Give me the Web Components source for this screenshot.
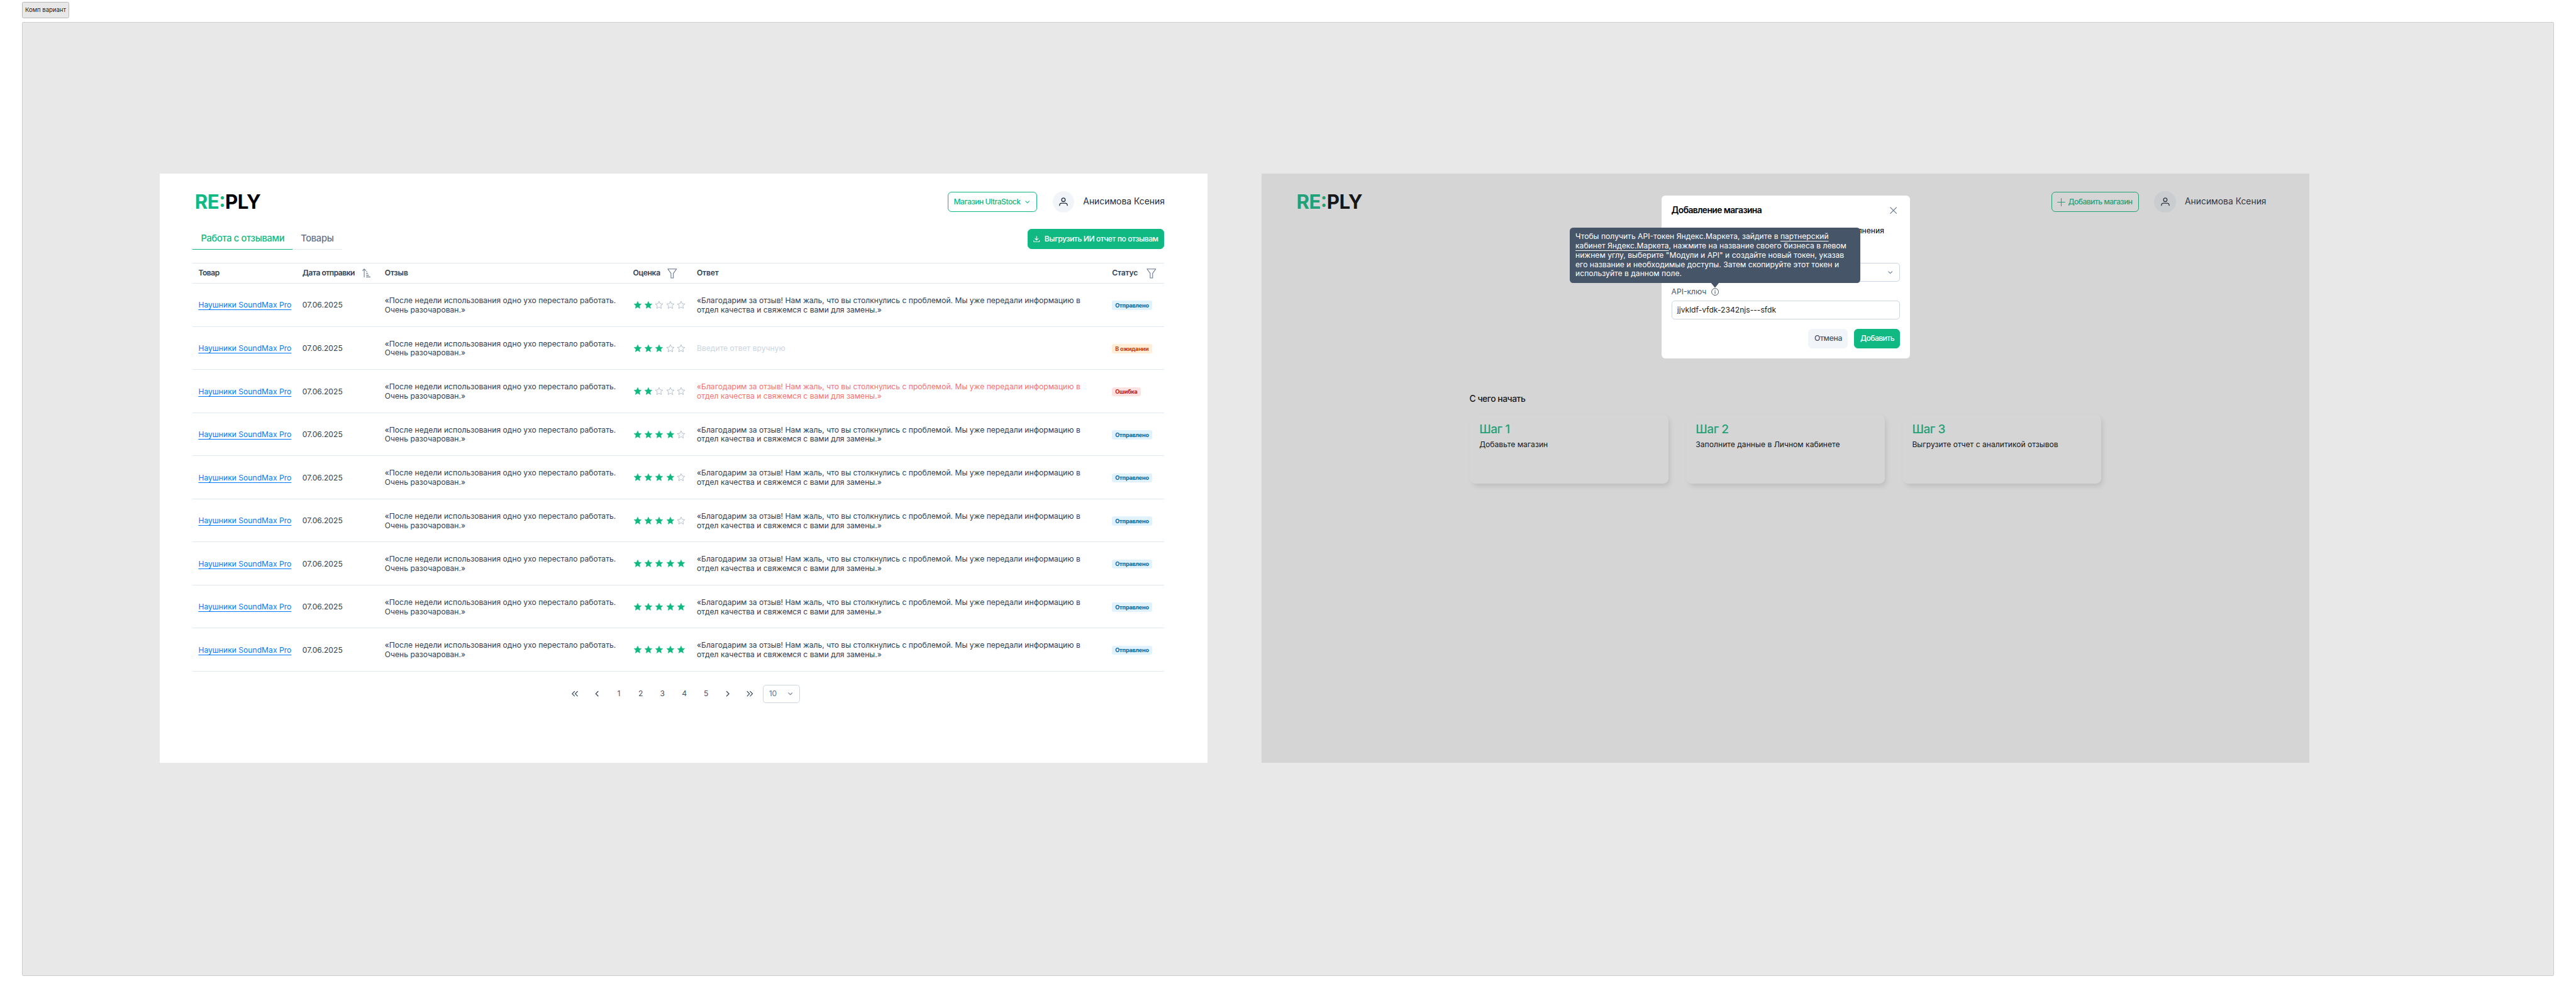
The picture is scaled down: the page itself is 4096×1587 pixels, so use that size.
<!DOCTYPE html>
<html lang="ru">
<head>
<meta charset="utf-8">
<title>RE:PLY</title>
<style>
  html, body { margin: 0; background: #fff; }
  body { font-family: Inter, "Liberation Sans", sans-serif; color: #334155; }
</style>
</head>
<body>
<design-board label="Комп вариант">
  <reviews-screen></reviews-screen>
  <start-screen></start-screen>
</design-board>
<script>
// Sizes are written in design pixels; K turns them into screen pixels.
const K = .8676;
const base = `<style>*{box-sizing:border-box} svg{display:block;flex:none}</style>`;
const scale = text => text.replace(/(-?\d*\.?\d+)px/g, (_, n) => +(n * K).toFixed(4) + 'px');
function define(name, render) {
  customElements.define(name, class extends HTMLElement {
    connectedCallback() {
      if (this.shadowRoot) return;
      this.attachShadow({ mode: 'open' }).innerHTML = scale(base + render(this));
    }
  });
}

const icons = {
  down: [8.4, 5.6, '<path d="M.9 1l3.300 3.300L7.500 1" fill="none" stroke="currentColor" stroke-width="1.2" stroke-linecap="round" stroke-linejoin="round"/>'],
  plus: [15, 15, '<path d="M7.5 .7v13.6M.7 7.5h13.6" fill="none" stroke="currentColor" stroke-width="1.2" stroke-linecap="round"/>'],
  user: [16, 16, '<g fill="none" stroke="currentColor" stroke-width="1.5" stroke-linecap="round"><ellipse cx="8" cy="4.2" rx="3.2" ry="3.3"/><path d="M.9 14.8v-.6c0-2.4 1.7-3.7 3.9-3.7h6.4c2.2 0 3.900 1.300 3.900 3.700v.6"/></g>'],
  download: [12, 12, '<path d="M6 .8v6.800M3.200 5.100L6 7.800l2.800-2.700M.8 8.300v1.600c0 .8.500 1.300 1.300 1.300h7.800c.8 0 1.300-.5 1.300-1.300V8.300" fill="none" stroke="currentColor" stroke-width="1.200" stroke-linecap="round" stroke-linejoin="round"/>'],
  sort: [16, 17, '<g fill="none" stroke="currentColor" stroke-width="1.200" stroke-linecap="round" stroke-linejoin="round"><path d="M3.600 15.700V1M.8 3.700L3.600 .9l2.800 2.800"/><path d="M7.800 5.600h.6M7.800 8.900h2M7.800 12.200h3.900M7.800 15.400h6.600" stroke-width="1.500"/></g>'],
  filter: [18, 18, '<path d="M1 .8h16l-5.800 8v8.400H6.800V8.800z" fill="none" stroke="currentColor" stroke-width="1.200" stroke-linejoin="round"/>'],
  close: [13, 13, '<path d="M1 1l11 11M12 1L1 12" stroke="currentColor" stroke-width="1.300" stroke-linecap="round"/>'],
  info: [14, 14, '<circle cx="7" cy="7" r="6.300" fill="none" stroke="currentColor" stroke-width="1.100"/><path d="M7 6.200v4" stroke="currentColor" stroke-width="1.200" stroke-linecap="round"/><circle cx="7" cy="3.900" r=".75" fill="currentColor"/>'],
  prev: [12, 12, '<path d="M8 1.800L3.800 6 8 10.200" fill="none" stroke="currentColor" stroke-width="1.700" stroke-linecap="round" stroke-linejoin="round"/>'],
  next: [12, 12, '<path d="M4 1.800L8.200 6 4 10.200" fill="none" stroke="currentColor" stroke-width="1.700" stroke-linecap="round" stroke-linejoin="round"/>'],
  first: [12, 12, '<path d="M5.200 1.800L1 6l4.200 4.200M10.700 1.800L6.500 6l4.200 4.200" fill="none" stroke="currentColor" stroke-width="1.500" stroke-linecap="round" stroke-linejoin="round"/>'],
  last: [12, 12, '<path d="M6.800 1.800L11 6l-4.200 4.200M1.300 1.800L5.500 6l-4.200 4.200" fill="none" stroke="currentColor" stroke-width="1.500" stroke-linecap="round" stroke-linejoin="round"/>']
};
define('ui-icon', el => {
  const [w, h, body] = icons[el.getAttribute('name')];
  return `<style>:host{display:block;flex:none}</style><svg style="width:${w}px;height:${h}px" viewBox="0 0 ${w} ${h}">${body}</svg>`;
});

define('brand-logo', () => `<style>
  :host{display:block;font-size:36px;line-height:44px;font-weight:700;letter-spacing:-.65px;color:#000;white-space:nowrap}
  span{color:#10b981;font-feature-settings:"case"}</style><span>RE:</span>PLY`);

define('ui-button', el => `<style>
  :host{display:flex;align-items:center;height:36px;width:${el.getAttribute('w')}px;padding:0 ${el.getAttribute('pad') || 10}px;border:1px solid #10b981;border-radius:7px;
    font-size:14px;line-height:17px;font-weight:500;letter-spacing:${el.getAttribute('track')}px;white-space:nowrap;color:#10b981}
  :host([solid]){background:#10b981;color:#fff}
  :host([muted]){background:#f1f5f9;border-color:#f1f5f9;color:#475569}
  slot[name=start]::slotted(*){margin-right:${el.getAttribute('gap') || 8}px}
  slot[name=end]::slotted(*){margin-left:auto;margin-right:3.500px}
  </style><slot name="start"></slot><slot></slot><slot name="end"></slot>`);

define('user-chip', () => `<style>
  :host{display:flex;align-items:center;gap:16px;font-size:16px;line-height:20px;color:#1e293b;white-space:nowrap}
  div{width:40px;height:40px;border-radius:50%;background:#f1f5f9;display:flex;align-items:center;justify-content:center}
  span{width:148px}
  </style><div><ui-icon name="user"></ui-icon></div><span>Анисимова Ксения</span>`);

define('app-header', () => `<style>
  :host{display:flex;align-items:center;height:40px;margin-top:32px;padding:0 80px 0 64px}
  brand-logo{flex:1}
  user-chip{margin-left:28px}
  </style><brand-logo></brand-logo><slot></slot><user-chip></user-chip>`);

define('tab-item', el => `<style>
  :host{display:flex;align-items:center;width:${el.getAttribute('w')}px;height:39.500px;padding:2px 0 1px 15px;border-bottom:1px solid #e2e8f0;font-size:17px;line-height:20px;font-weight:500;letter-spacing:-.39px;color:#64748b;white-space:nowrap}
  :host([active]){color:#10b981;border-color:#10b981}
  </style><slot></slot>`);

define('star-rating', el => {
  const n = +el.getAttribute('value');
  const star = on => `<svg style="width:16px;height:16px" viewBox="0 0 16 16"><path d="M8 1.300l2 4.400 4.800.5-3.600 3.200 1 4.900L8 11.900l-4.200 2.400 1-4.900L1.200 6.200l4.800-.5z" ${on ? 'fill="#10b981" stroke="#10b981"' : 'fill="none" stroke="#94a3b8"'} stroke-width="${on ? .6 : .8}" stroke-linejoin="round"/></svg>`;
  return `<style>:host{display:flex;gap:4px}</style>` + [1,2,3,4,5].map(i => star(i <= n)).join('');
});

define('status-badge', () => `<style>
  :host{display:inline-flex;align-items:center;height:17px;padding:0 6.300px 0 5.900px;border-radius:3.500px;font-size:10.5px;line-height:13px;font-weight:700;letter-spacing:-.27px;white-space:nowrap;background:#e0f2fe;color:#0369a1}
  :host([kind=wait]){background:#ffedd5;color:#c2410c}
  :host([kind=error]){background:#fee2e2;color:#b91c1c}
  </style><slot></slot>`);

const columns = 'display:grid;grid-template-columns:190.6px 151px 455px 117px 761px 1fr;padding-left:10.400px;align-items:center;';
define('table-head', () => `<style>
  :host{${columns}height:38px;border:solid #e2e8f0;border-width:1px 0;font-size:14px;line-height:17px;font-weight:600;color:#334155}
  div{display:flex;align-items:center;white-space:nowrap}
  ui-icon{color:#64748b}
  </style><div><span style="letter-spacing:-.6px">Товар</span></div>
  <div><span style="width:110px;letter-spacing:-.592px">Дата отправки</span><ui-icon name="sort"></ui-icon></div>
  <div><span style="letter-spacing:-.15px">Отзыв</span></div>
  <div><span style="width:63px;letter-spacing:-.438px">Оценка</span><ui-icon name="filter"></ui-icon></div>
  <div><span style="letter-spacing:-.23px">Ответ</span></div>
  <div><span style="width:63px;letter-spacing:-.217px">Статус</span><ui-icon name="filter"></ui-icon></div>`);

define('review-row', el => {
  const state = el.getAttribute('state') || 'sent';
  const badge = { sent: 'Отправлено', wait: 'В ожидании', error: 'Ошибка' }[state];
  const answer = state === 'wait' ? 'Введите ответ вручную' : '«Благодарим за отзыв! Нам жаль, что вы столкнулись с проблемой. Мы уже передали информацию в<br>отдел качества и свяжемся с вами для замены.»';
  return `<style>
  :host{${columns}height:79px;border-bottom:1px solid #e2e8f0;font-size:14px;line-height:17px;color:#334155;white-space:nowrap;padding-top:2px}
  a{color:#007bff;text-decoration:underline;text-decoration-thickness:1px;text-underline-offset:3px}
  star-rating{margin:-2px 0 0}
  .wait{color:#cbd5e1}.error{color:#f87171}
  .b{display:flex}
  </style><div><a>Наушники SoundMax Pro</a></div><div>07.06.2025</div>
  <div>«После недели использования одно ухо перестало работать.<br>Очень разочарован.»</div>
  <star-rating value="${el.getAttribute('stars')}"></star-rating>
  <div class="${state}">${answer}</div>
  <div class="b"><status-badge kind="${state}">${badge}</status-badge></div>`;
});

define('page-nav', () => `<style>
  :host{display:flex;align-items:center;padding-left:681px;font-size:14px;line-height:17px;color:#475569}
  div{width:40px;display:flex;justify-content:center}
  section{width:67px;height:34px;margin-left:4.500px;border:1px solid #cbd5e1;border-radius:6px;display:flex;align-items:center;justify-content:space-between;padding:0 12px 0 9.500px;color:#64748b}
  </style>${['first', 'prev', 1, 2, 3, 4, 5, 'next', 'last'].map(v => `<div>${typeof v === 'number' ? v : `<ui-icon name="${v}"></ui-icon>`}</div>`).join('')}
  <section><span>10</span><ui-icon name="down"></ui-icon></section>`);

define('reviews-screen', () => `<style>
  :host{display:flow-root;flex:none;width:1920px;height:1080px;background:#fff}
  .bar{display:flex;align-items:center;justify-content:space-between;margin:28px 80px 0 60px;height:40px}
  .tabs{display:flex}
  .table{margin:24px 80px 0 60px}
  page-nav{margin:24px 80px 0 60px}
  </style>
  <app-header><ui-button w="164" track="-.552" pad="9.500">Магазин UltraStock<ui-icon slot="end" name="down"></ui-icon></ui-button></app-header>
  <div class="bar"><div class="tabs"><tab-item active w="183">Работа с отзывами</tab-item><tab-item w="91">Товары</tab-item></div>
  <ui-button solid w="250" track="-.5"><ui-icon slot="start" name="download"></ui-icon>Выгрузить ИИ отчет по отзывам</ui-button></div>
  <div class="table"><table-head></table-head>
  ${[[2], [3, 'wait'], [2, 'error'], [4], [4], [4], [5], [5], [5]].map(([s, t]) => `<review-row stars="${s}" state="${t || 'sent'}"></review-row>`).join('')}</div>
  <page-nav></page-nav>`);

define('step-card', el => `<style>
  :host{display:block;flex:1;height:126px;padding:14px 18px;border-radius:10px;background:#fff;box-shadow:4px 6px 10px -2px rgba(0,0,0,.13);color:#000;font-size:14px;line-height:17px}
  h3{margin:0;font-size:22px;line-height:26px;font-weight:500;letter-spacing:-.5px;color:#10b981}
  p{margin:7px 0 0}
  </style><h3>${el.getAttribute('heading')}</h3><p><slot></slot></p>`);

define('token-tooltip', () => `<style>
  :host{display:block;width:532px;height:101px;padding:8.500px 0 0 10.200px;border-radius:6px;background:#475569;color:#fff;font-size:14px;line-height:17px;white-space:nowrap}
  u{text-decoration-thickness:1px;text-underline-offset:3px}
  svg{position:absolute;left:258px;top:100px;width:16px;height:10px}
  </style>Чтобы получить API-токен Яндекс.Маркета, зайдите в <u>партнерский</u><br><u>кабинет Яндекс.Маркета</u>, нажмите на название своего бизнеса в левом<br>нижнем углу, выберите "Модули и API" и создайте новый токен, указав<br>его название и необходимые доступы. Затем скопируйте этот токен и<br>используйте в данном поле.
  <svg viewBox="0 0 16 10"><path d="M0 0h16L8 10z" fill="#475569"/></svg>`);

define('store-dialog', () => `<style>
  :host{display:flex;flex-direction:column;width:455px;height:299px;padding:17px 18px 18px;border-radius:7px;background:#fff;color:#000;font-size:14px;line-height:17px}
  .top{display:flex;justify-content:space-between;align-items:center;height:22px;padding-right:5.500px;font-size:16px;line-height:20px;font-weight:600;letter-spacing:-.682px}
  .top ui-icon{color:#64748b}
  .note{margin-top:18px;padding-right:29px;text-align:right}
  .box{height:34px;border:1px solid #cbd5e1;border-radius:6px;display:flex;align-items:center;padding:1px 9.500px 0;color:#1e1e1e}
  .sel{margin-top:50px;justify-content:flex-end;padding-right:12px;color:#64748b}
  .lab{display:flex;align-items:center;gap:9px;height:20px;margin:9px 0 6px;color:#475569}
  .act{display:flex;justify-content:flex-end;gap:12px;margin-top:18px}
  token-tooltip{position:absolute;left:-168px;top:59px}
  </style>
  <div class="top"><span>Добавление магазина</span><ui-icon name="close"></ui-icon></div>
  <div class="note">заполнения</div>
  <div class="box sel"><ui-icon name="down"></ui-icon></div>
  <div class="lab">API-ключ<ui-icon name="info"></ui-icon></div>
  <div class="box">jjvkldf-vfdk-2342njs---sfdk</div>
  <div class="act"><ui-button muted w="72" track="-.392">Отмена</ui-button><ui-button solid w="84" track="-.652">Добавить</ui-button></div>
  <token-tooltip></token-tooltip>`);

define('start-screen', () => `<style>
  :host{display:flow-root;flex:none;position:relative;width:1920px;height:1080px;background:#fff}
  .start{margin:332px 381px 0;color:#000}
  h2{margin:0;font-size:16px;line-height:20px;font-weight:500;letter-spacing:-.551px}
  .cards{display:flex;gap:32px;margin-top:18px}
  .shade{position:absolute;inset:0;background:rgba(90,90,90,.255)}
  store-dialog{position:absolute;left:733px;top:40px}
  </style>
  <app-header><ui-button w="160" track="-.648" pad="9" gap="5"><ui-icon slot="start" name="plus"></ui-icon>Добавить магазин</ui-button></app-header>
  <div class="start"><h2>С чего начать</h2><div class="cards">
  <step-card heading="Шаг 1">Добавьте магазин</step-card>
  <step-card heading="Шаг 2">Заполните данные в Личном кабинете</step-card>
  <step-card heading="Шаг 3">Выгрузите отчет с аналитикой отзывов</step-card></div></div>
  <div class="shade"></div>
  <store-dialog></store-dialog>`);

define('design-board', el => `<style>
  :host{box-sizing:border-box;width:4721px;height:1829px;display:flex;flex-direction:column;align-items:flex-start;padding:4px 40px 40px 40px}
  .tag{width:87px;height:30px;border:1px solid #b9b9b9;border-radius:3px;background:#e8e8e8;color:#1e1e1e;font-size:11px;line-height:14px;display:flex;align-items:center;justify-content:center;white-space:nowrap;margin-bottom:6px}
  .area{flex:1;width:100%;border:1px solid #cdcdcd;border-radius:2px;background:#e8e8e8;display:flex;align-items:flex-start;gap:99px;padding:277px 0 0 252px}
  </style><div class="tag">${el.getAttribute('label')}</div><div class="area"><slot></slot></div>`);
</script>
</body>
</html>
